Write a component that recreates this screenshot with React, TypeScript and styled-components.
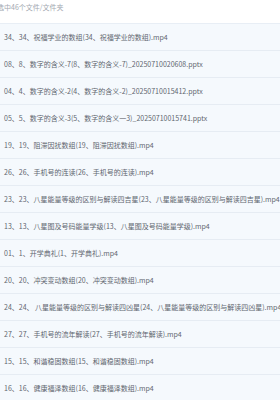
import React from "react";
import styled, { createGlobalStyle } from "styled-components";

const Global = createGlobalStyle`
  html, body { margin: 0; padding: 0; background: #ffffff; }
  body { width: 280px; height: 400px; overflow: hidden; }
`;

const Page = styled.div`
  width: 280px;
  height: 400px;
  overflow: hidden;
  background: #ffffff;
  font-family: "Noto Sans CJK SC", "Noto Sans", sans-serif;
`;

const Header = styled.div`
  height: 23px;
  display: flex;
  align-items: flex-start;
  padding-top: 2px;
  box-sizing: border-box;
  font-size: 7px;
  line-height: 11px;
  color: #a3a9b1;
  margin-left: -3px;
  white-space: nowrap;
`;

const List = styled.div`
  display: flex;
  flex-direction: column;
  border-top: 1px solid #e8eef5;
`;

const Row = styled.div`
  height: 27px;
  box-sizing: border-box;
  display: flex;
  align-items: center;
  padding-left: 4px;
  background: #f5f9fd;
  border-bottom: 1px solid #e6ecf3;
  font-size: 7px;
  color: #5f666f;
  white-space: nowrap;
  overflow: hidden;
`;

const files = [
  "34、34、祝福学业的数组(34、祝福学业的数组).mp4",
  "08、8、数字的含义-7(8、数字的含义-7)_20250710020608.pptx",
  "04、4、数字的含义-2(4、数字的含义-2)_20250710015412.pptx",
  "05、5、数字的含义-3(5、数字的含义一3)_20250710015741.pptx",
  "19、19、阻滞因扰数组(19、阻滞因扰数组).mp4",
  "26、26、手机号的连读(26、手机号的连读).mp4",
  "23、23、八星能量等级的区别与解读四吉星(23、八星能量等级的区别与解读四吉星).mp4",
  "13、13、八星图及号码能量学级(13、八星图及号码能量学级).mp4",
  "01、1、开学典礼(1、开学典礼).mp4",
  "20、20、冲突变动数组(20、冲突变动数组).mp4",
  "24、24、 八星能量等级的区别与解读四凶星(24、八星能量等级的区别与解读四凶星).mp4",
  "27、27、手机号的流年解读(27、手机号的流年解读).mp4",
  "15、15、和谐稳固数组(15、和谐稳固数组).mp4",
  "16、16、健康福泽数组(16、健康福泽数组).mp4",
];

export default function App() {
  return (
    <Page>
      <Global />
      <Header>选中46个文件/文件夹</Header>
      <List>
        {files.map((f) => (
          <Row key={f}>{f}</Row>
        ))}
      </List>
    </Page>
  );
}
